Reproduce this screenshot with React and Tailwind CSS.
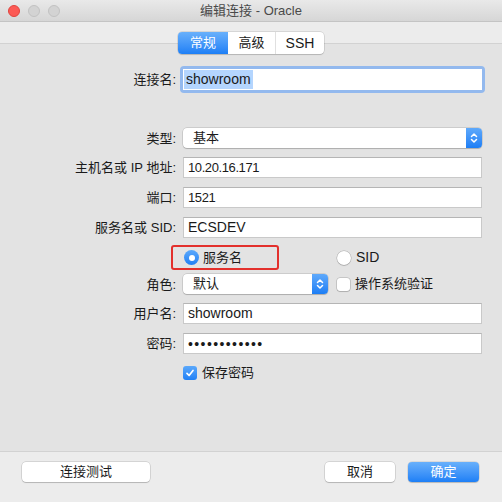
import React from "react";

const font = { fontFamily: '"Liberation Sans", "Noto Sans CJK SC", sans-serif' };

function Stepper() {
  return (
    <div className="w-[16px] h-full rounded-r-[4px] bg-gradient-to-b from-[#5ea9fb] to-[#1b7ef5] flex items-center justify-center">
      <svg width="8" height="12" viewBox="0 0 8 12" fill="none" stroke="white" strokeWidth="1.5" strokeLinecap="round" strokeLinejoin="round">
        <path d="M1.5 4.5 L4 2 L6.5 4.5" />
        <path d="M1.5 7.5 L4 10 L6.5 7.5" />
      </svg>
    </div>
  );
}

function Label({ children }) {
  return (
    <div className="w-[176px] shrink-0 text-right text-[13px] text-[#1a1a1a] leading-none">{children}</div>
  );
}

function TextInput({ children, className = "" }) {
  return (
    <div className={"ml-[7px] w-[299px] h-[21px] bg-white border border-[#c9c9c9] border-t-[#b5b5b5] flex items-center pl-[4px] text-[#1a1a1a] " + className}>
      {children}
    </div>
  );
}

function Row({ label, children, className = "" }) {
  return (
    <div className={"flex items-center " + className}>
      <Label>{label}</Label>
      {children}
    </div>
  );
}

export default function App() {
  return (
    <div className="w-[502px] h-[502px] bg-[#ececec] flex flex-col overflow-hidden" style={font}>
      {/* title bar */}
      <div className="h-[22px] shrink-0 grid grid-cols-[1fr_auto_1fr] items-center bg-gradient-to-b from-[#e9e9e9] to-[#d6d6d6] border-b border-[#c4c4c4]">
        <div className="flex items-center gap-[8px] pl-[8px]">
          <div className="w-[12px] h-[12px] rounded-full bg-[#fc5a55] border border-[#e0443e]" />
          <div className="w-[12px] h-[12px] rounded-full bg-[#d3d3d3] border border-[#c2c2c2]" />
          <div className="w-[12px] h-[12px] rounded-full bg-[#d3d3d3] border border-[#c2c2c2]" />
        </div>
        <div className="text-[13px] text-[#4a4a4a] leading-none">编辑连接 - Oracle</div>
        <div />
      </div>

      {/* tabs */}
      <div className="relative z-10 mt-[10px] flex justify-center">
        <div className="flex h-[22px] rounded-[4px] bg-white shadow-[0_0_0_0.5px_rgba(0,0,0,0.18),0_1px_1px_rgba(0,0,0,0.12)] text-[13px] overflow-hidden">
          <div className="w-[50px] flex items-center justify-center text-white bg-gradient-to-b from-[#68b0fb] to-[#1c7ff6]">常规</div>
          <div className="w-[48px] flex items-center justify-center text-[#1a1a1a] border-r border-[#e0e0e0]">高级</div>
          <div className="w-[48px] flex items-center justify-center text-[#1a1a1a] text-[14px]">SSH</div>
        </div>
      </div>

      {/* tab box */}
      <div className="-mt-[11px] h-[409px] shrink-0 bg-[#e3e3e3] border-y border-[#d2d2d2] flex flex-col">
        <Row label="连接名:" className="mt-[22px]">
          <div className="ml-[4px] w-[305px] h-[27px] rounded-[4px] p-[3px] bg-[#93b9ee] flex">
            <div className="w-full h-full bg-white flex items-center pl-[1px] text-[14px] text-[#1a1a1a]">
              <span className="bg-[#b4d5fe] px-[2px] leading-[19px]">showroom</span>
            </div>
          </div>
        </Row>

        <Row label="类型:" className="mt-[35px]">
          <div className="ml-[7px] w-[299px] h-[20px] flex rounded-[4px] bg-white shadow-[0_0_0_0.5px_rgba(0,0,0,0.2),0_1px_1px_rgba(0,0,0,0.15)]">
            <div className="flex-1 flex items-center pl-[10px] text-[13px] text-[#1a1a1a]">基本</div>
            <Stepper />
          </div>
        </Row>

        <Row label="主机名或 IP 地址:" className="mt-[9px]">
          <TextInput className="text-[13px] tracking-[-0.4px]">10.20.16.171</TextInput>
        </Row>
        <Row label="端口:" className="mt-[9px]">
          <TextInput className="text-[13px] tracking-[-0.4px]">1521</TextInput>
        </Row>
        <Row label="服务名或 SID:" className="mt-[9px]">
          <TextInput className="text-[14px]">ECSDEV</TextInput>
        </Row>

        <div className="mt-[7px] flex items-center h-[25px]">
          <div className="ml-[171px] w-[108px] h-[25px] rounded-[3px] border-2 border-[#e3302c] flex items-center pl-[11px]">
            <div className="w-[15px] h-[15px] rounded-full bg-gradient-to-b from-[#5aa8fb] to-[#1f80f5] flex items-center justify-center">
              <div className="w-[6px] h-[6px] rounded-full bg-white" />
            </div>
            <span className="ml-[4px] text-[13px] text-[#1a1a1a]">服务名</span>
          </div>
          <div className="ml-[58px] w-[14px] h-[14px] rounded-full bg-white shadow-[0_0_0_0.5px_rgba(0,0,0,0.25),0_1px_1px_rgba(0,0,0,0.12)]" />
          <span className="ml-[5px] text-[14px] text-[#1a1a1a]">SID</span>
        </div>

        <Row label="角色:" className="mt-[4px]">
          <div className="ml-[7px] w-[145px] h-[20px] flex rounded-[4px] bg-white shadow-[0_0_0_0.5px_rgba(0,0,0,0.2),0_1px_1px_rgba(0,0,0,0.15)]">
            <div className="flex-1 flex items-center pl-[10px] text-[13px] text-[#1a1a1a]">默认</div>
            <Stepper />
          </div>
          <div className="ml-[9px] w-[13px] h-[13px] rounded-[3px] bg-white shadow-[0_0_0_0.5px_rgba(0,0,0,0.25),0_1px_1px_rgba(0,0,0,0.12)]" />
          <span className="ml-[5px] text-[13px] text-[#1a1a1a]">操作系统验证</span>
        </Row>

        <Row label="用户名:" className="mt-[9px]">
          <TextInput className="text-[14px]">showroom</TextInput>
        </Row>
        <Row label="密码:" className="mt-[9px]">
          <TextInput>
            <span className="text-[14px] tracking-[1.4px] leading-none">••••••••••••</span>
          </TextInput>
        </Row>

        <div className="mt-[9px] flex items-center">
          <div className="ml-[183px] w-[14px] h-[14px] rounded-[3px] bg-gradient-to-b from-[#5aa8fb] to-[#1f80f5] flex items-center justify-center">
            <svg width="10" height="10" viewBox="0 0 10 10" fill="none" stroke="white" strokeWidth="1.7" strokeLinecap="round" strokeLinejoin="round">
              <path d="M2 5.3 L4.1 7.5 L8 2.5" />
            </svg>
          </div>
          <span className="ml-[5px] text-[13px] text-[#1a1a1a]">保存密码</span>
        </div>
      </div>

      {/* bottom buttons */}
      <div className="flex items-center pt-[10px] px-[22px] pr-[23px]">
        <div className="w-[128px] h-[20px] rounded-[4px] bg-white shadow-[0_0_0_0.5px_rgba(0,0,0,0.2),0_1px_1px_rgba(0,0,0,0.15)] flex items-center justify-center text-[13px] text-[#1a1a1a]">连接测试</div>
        <div className="flex-1" />
        <div className="w-[70px] h-[20px] rounded-[4px] bg-white shadow-[0_0_0_0.5px_rgba(0,0,0,0.2),0_1px_1px_rgba(0,0,0,0.15)] flex items-center justify-center text-[13px] text-[#1a1a1a]">取消</div>
        <div className="ml-[13px] w-[71px] h-[20px] rounded-[4px] bg-gradient-to-b from-[#68b0fb] to-[#1c7ff6] shadow-[0_0_0_0.5px_rgba(0,0,0,0.15),0_1px_1px_rgba(0,0,0,0.15)] flex items-center justify-center text-[13px] text-white">确定</div>
      </div>
    </div>
  );
}
